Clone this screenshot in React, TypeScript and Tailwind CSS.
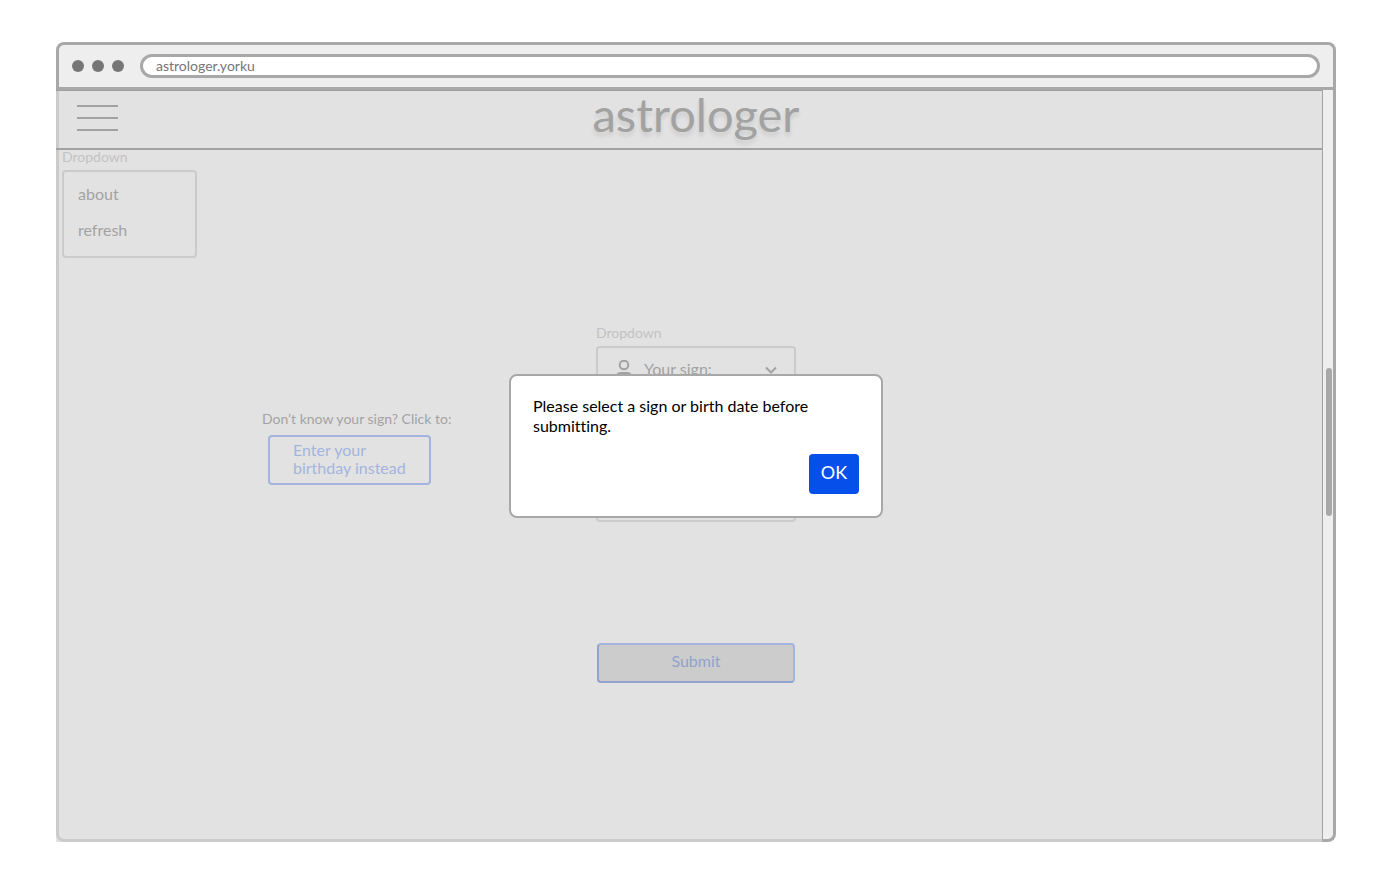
import React, { useState } from "react";

function WindowBar() {
  return (
    <header className="flex h-12 items-center rounded-t-lg border-[3px] border-[#a8a8a8] bg-[#eeeeee] px-[13px]">
      <div className="flex gap-2" aria-hidden="true">
        <span className="size-3 rounded-full bg-[#767676]" />
        <span className="size-3 rounded-full bg-[#767676]" />
        <span className="size-3 rounded-full bg-[#767676]" />
      </div>
      <input
        type="text"
        aria-label="Address"
        defaultValue="astrologer.yorku"
        className="ml-4 h-6 min-w-0 flex-1 rounded-full border-[3px] border-[#a8a8a8] bg-white px-[13px] pb-[2px] text-sm leading-4 text-[#767676] outline-none"
      />
    </header>
  );
}

function NavBar() {
  return (
    <div className="grid h-[60px] grid-cols-[1fr_auto_1fr] items-center border-t border-b-2 border-t-[#9e9e9e] border-b-[#a2a2a2]">
      <div className="flex h-full items-center border-l-[3px] border-[#cbcbcb] pb-1 pl-[18px]">
        <button type="button" aria-label="Menu" className="flex flex-col gap-[10px]">
          <span className="h-[2px] w-[41px] bg-[#a2a2a2]" />
          <span className="h-[2px] w-[41px] bg-[#a2a2a2]" />
          <span className="h-[2px] w-[41px] bg-[#a2a2a2]" />
        </button>
      </div>
      <h1 className="pb-[10px] pl-[14px] text-[47px] leading-[47px] text-[#a2a2a2] [text-shadow:0_4px_4px_rgba(0,0,0,0.1)]">
        astrologer
      </h1>
    </div>
  );
}

function SideColumn() {
  return (
    <div className="flex flex-col items-start">
      <nav aria-labelledby="menu-label">
        <p id="menu-label" className="text-sm leading-[14px] text-[#c2c2c2]">Dropdown</p>
        <ul className="mt-[6px] flex h-[88px] w-[135px] flex-col justify-center gap-3 rounded border-2 border-[#cbcbcb] px-[14px] pb-1 text-base leading-6 text-[#a2a2a2]">
          <li><a href="#about">about</a></li>
          <li><a href="#refresh">refresh</a></li>
        </ul>
      </nav>
      <div className="mt-[151px] ml-[200px] flex flex-col">
        <p className="text-sm leading-5 text-[#a2a2a2]">Don’t know your sign? Click to:</p>
        <button
          type="button"
          className="mt-[6px] ml-[6px] h-[50px] w-[163px] rounded border-2 border-[#a3b5dd] pb-[3px] pl-[23px] text-left text-base leading-[18px] text-[#a3b5dd]"
        >
          Enter your
          <br />
          birthday instead
        </button>
      </div>
    </div>
  );
}

function SignForm() {
  return (
    <form className="flex flex-col pt-[176px]" onSubmit={(e) => e.preventDefault()}>
      <label htmlFor="sign" className="text-sm leading-[14px] text-[#c2c2c2]">Dropdown</label>
      <div className="mt-[6px] h-[176px] rounded border-2 border-[#cbcbcb]">
        <div className="grid h-11 grid-cols-1 items-center">
          <svg viewBox="0 0 18 20" fill="none" stroke="#a2a2a2" strokeWidth="2" className="col-start-1 row-start-1 ml-[17px] h-5 w-[18px]" aria-hidden="true">
            <circle cx="9" cy="5" r="4.300" />
            <path d="M2 19v-2c0-2.500 1.500-4 4-4h6c2.500 0 4 1.500 4 4v2" />
          </svg>
          <svg viewBox="0 0 12 8" fill="none" stroke="#a2a2a2" strokeWidth="2" className="col-start-1 row-start-1 mr-[17px] h-2 w-3 justify-self-end" aria-hidden="true">
            <path d="M1 1.500l5 5 5-5" />
          </svg>
          <select id="sign" className="col-start-1 row-start-1 h-full w-full appearance-none bg-transparent pb-[3px] pl-[46px] text-base text-[#a2a2a2] outline-none">
            <option>Your sign:</option>
          </select>
        </div>
      </div>
      <button
        type="submit"
        className="mx-px mt-[121px] h-10 rounded border-2 border-[#a3b5dd] border-b-[#91a3cd] border-l-[#91a3cd] bg-[#cccccc] pb-1 text-base text-[#91a3cd]"
      >
        Submit
      </button>
    </form>
  );
}

function ScrollTrack() {
  return (
    <div className="flex w-[14px] flex-col rounded-br-lg border-r-[3px] border-b-[3px] border-l border-r-[#a8a8a8] border-b-[#a8a8a8] border-l-[#a2a2a2] bg-[#eeeeee]">
      <div className="grow-[278]" />
      <div className="mr-px h-[148px] w-[6px] self-end rounded-full bg-[#a8a8a8]" />
      <div className="grow-[323]" />
    </div>
  );
}

function AlertDialog({ onClose }: { onClose: () => void }) {
  return (
    <div className="absolute inset-0 flex items-center justify-center pt-2">
      <div
        role="alertdialog"
        aria-labelledby="alert-text"
        className="flex w-[374px] flex-col rounded-lg border-2 border-[#a8a8a8] bg-white p-[22px] pt-5"
      >
        <p id="alert-text" className="text-base leading-5 text-black">
          Please select a sign or birth date before submitting.
        </p>
        <button
          type="button"
          onClick={onClose}
          className="mt-[18px] h-10 w-[50px] self-end rounded bg-[#064feb] pb-1 text-lg leading-5 text-white"
        >
          OK
        </button>
      </div>
    </div>
  );
}

export default function App() {
  const [open, setOpen] = useState(true);
  return (
    <div className="flex min-h-screen flex-col bg-white px-14 pt-[42px] pb-[43px] font-['Lato',sans-serif] [font-variant-ligatures:none]">
      <div className="relative flex flex-1 flex-col">
        <WindowBar />
        <div className="flex flex-1">
          <div className="flex flex-1 flex-col bg-[#e2e2e2]">
            <NavBar />
            <main className="grid flex-1 grid-cols-[1fr_200px_calc(50%-104px)] rounded-bl-lg border-b-[3px] border-l-[3px] border-[#cbcbcb] pl-[3px]">
              <SideColumn />
              <SignForm />
            </main>
          </div>
          <ScrollTrack />
        </div>
        {open && <AlertDialog onClose={() => setOpen(false)} />}
      </div>
    </div>
  );
}
